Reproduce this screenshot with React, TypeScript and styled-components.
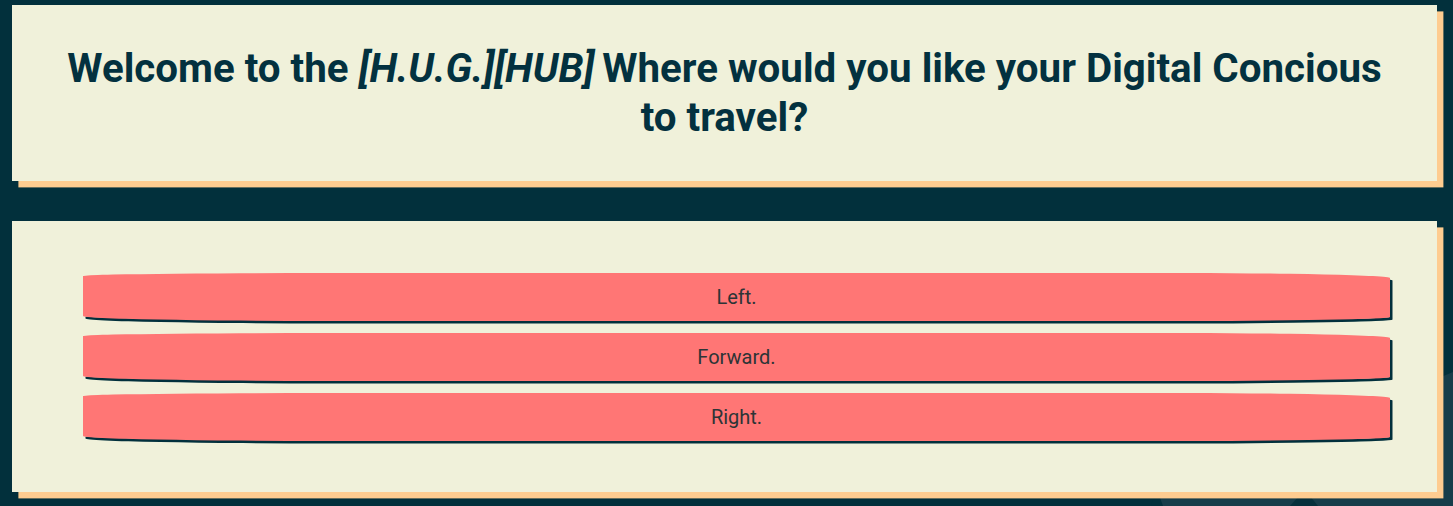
import React from "react";
import styled, { createGlobalStyle } from "styled-components";

const Global = createGlobalStyle`
  html, body { margin: 0; padding: 0; }
  body {
    background: #02303c;
    font-family: Roboto, "Noto Sans", sans-serif;
    min-height: 506px;
  }
  #root { position: relative; min-height: 506px; overflow: hidden; }
`;

const Backdrop = styled.svg`
  position: absolute;
  left: 0;
  top: 0;
  width: 1453px;
  height: 506px;
  z-index: 0;
  pointer-events: none;
`;

const Page = styled.main`
  position: relative;
  z-index: 1;
  display: flex;
  flex-direction: column;
  gap: 40px;
  padding: 5px 16px 0 12px;
`;

const Card = styled.section`
  background: #f0f1da;
  box-shadow: 6.4px 6.4px 0 #fecc90;
`;

const TitleCard = styled(Card)`
  padding: 39px 44px 39px;
`;

const Title = styled.h1`
  margin: 0;
  text-align: center;
  font-family: Roboto, sans-serif;
  font-weight: 700;
  font-size: 40.3px;
  line-height: 49px;
  color: #03313f;
  em { font-style: italic; margin-right: -2px; }
`;

const ChoiceCard = styled(Card)`
  display: flex;
  flex-direction: column;
  gap: 12px;
  padding: 52px 47px 51px 71px;
`;

const Choice = styled.button`
  display: block;
  width: 100%;
  height: 48px;
  border: none;
  background: #ff7675;
  color: #2d3436;
  font-family: Roboto, sans-serif;
  font-size: 20px;
  cursor: pointer;
  border-radius: 255px 225px 225px 255px / 3px 5px 4px 5px;
  box-shadow: 2.5px 2.5px 0.5px #02303c;
`;

export default function App() {
  return (
    <>
      <Global />
      <Backdrop viewBox="0 0 1453 506" aria-hidden="true">
        <polygon points="1150,506 1165,492 1453,372 1453,506" fill="#173d4a" />
        <polygon points="1150,506 1158,492 1163,506" fill="#02303c" />
        <polygon points="1290,506 1299,496 1310,496 1318,506" fill="#06303c" />
      </Backdrop>
      <Page>
        <TitleCard>
          <Title>
            Welcome to the <em>[H.U.G.][HUB]</em> Where would you like your Digital Concious to travel?
          </Title>
        </TitleCard>
        <ChoiceCard>
          <Choice>Left.</Choice>
          <Choice>Forward.</Choice>
          <Choice>Right.</Choice>
        </ChoiceCard>
      </Page>
    </>
  );
}
